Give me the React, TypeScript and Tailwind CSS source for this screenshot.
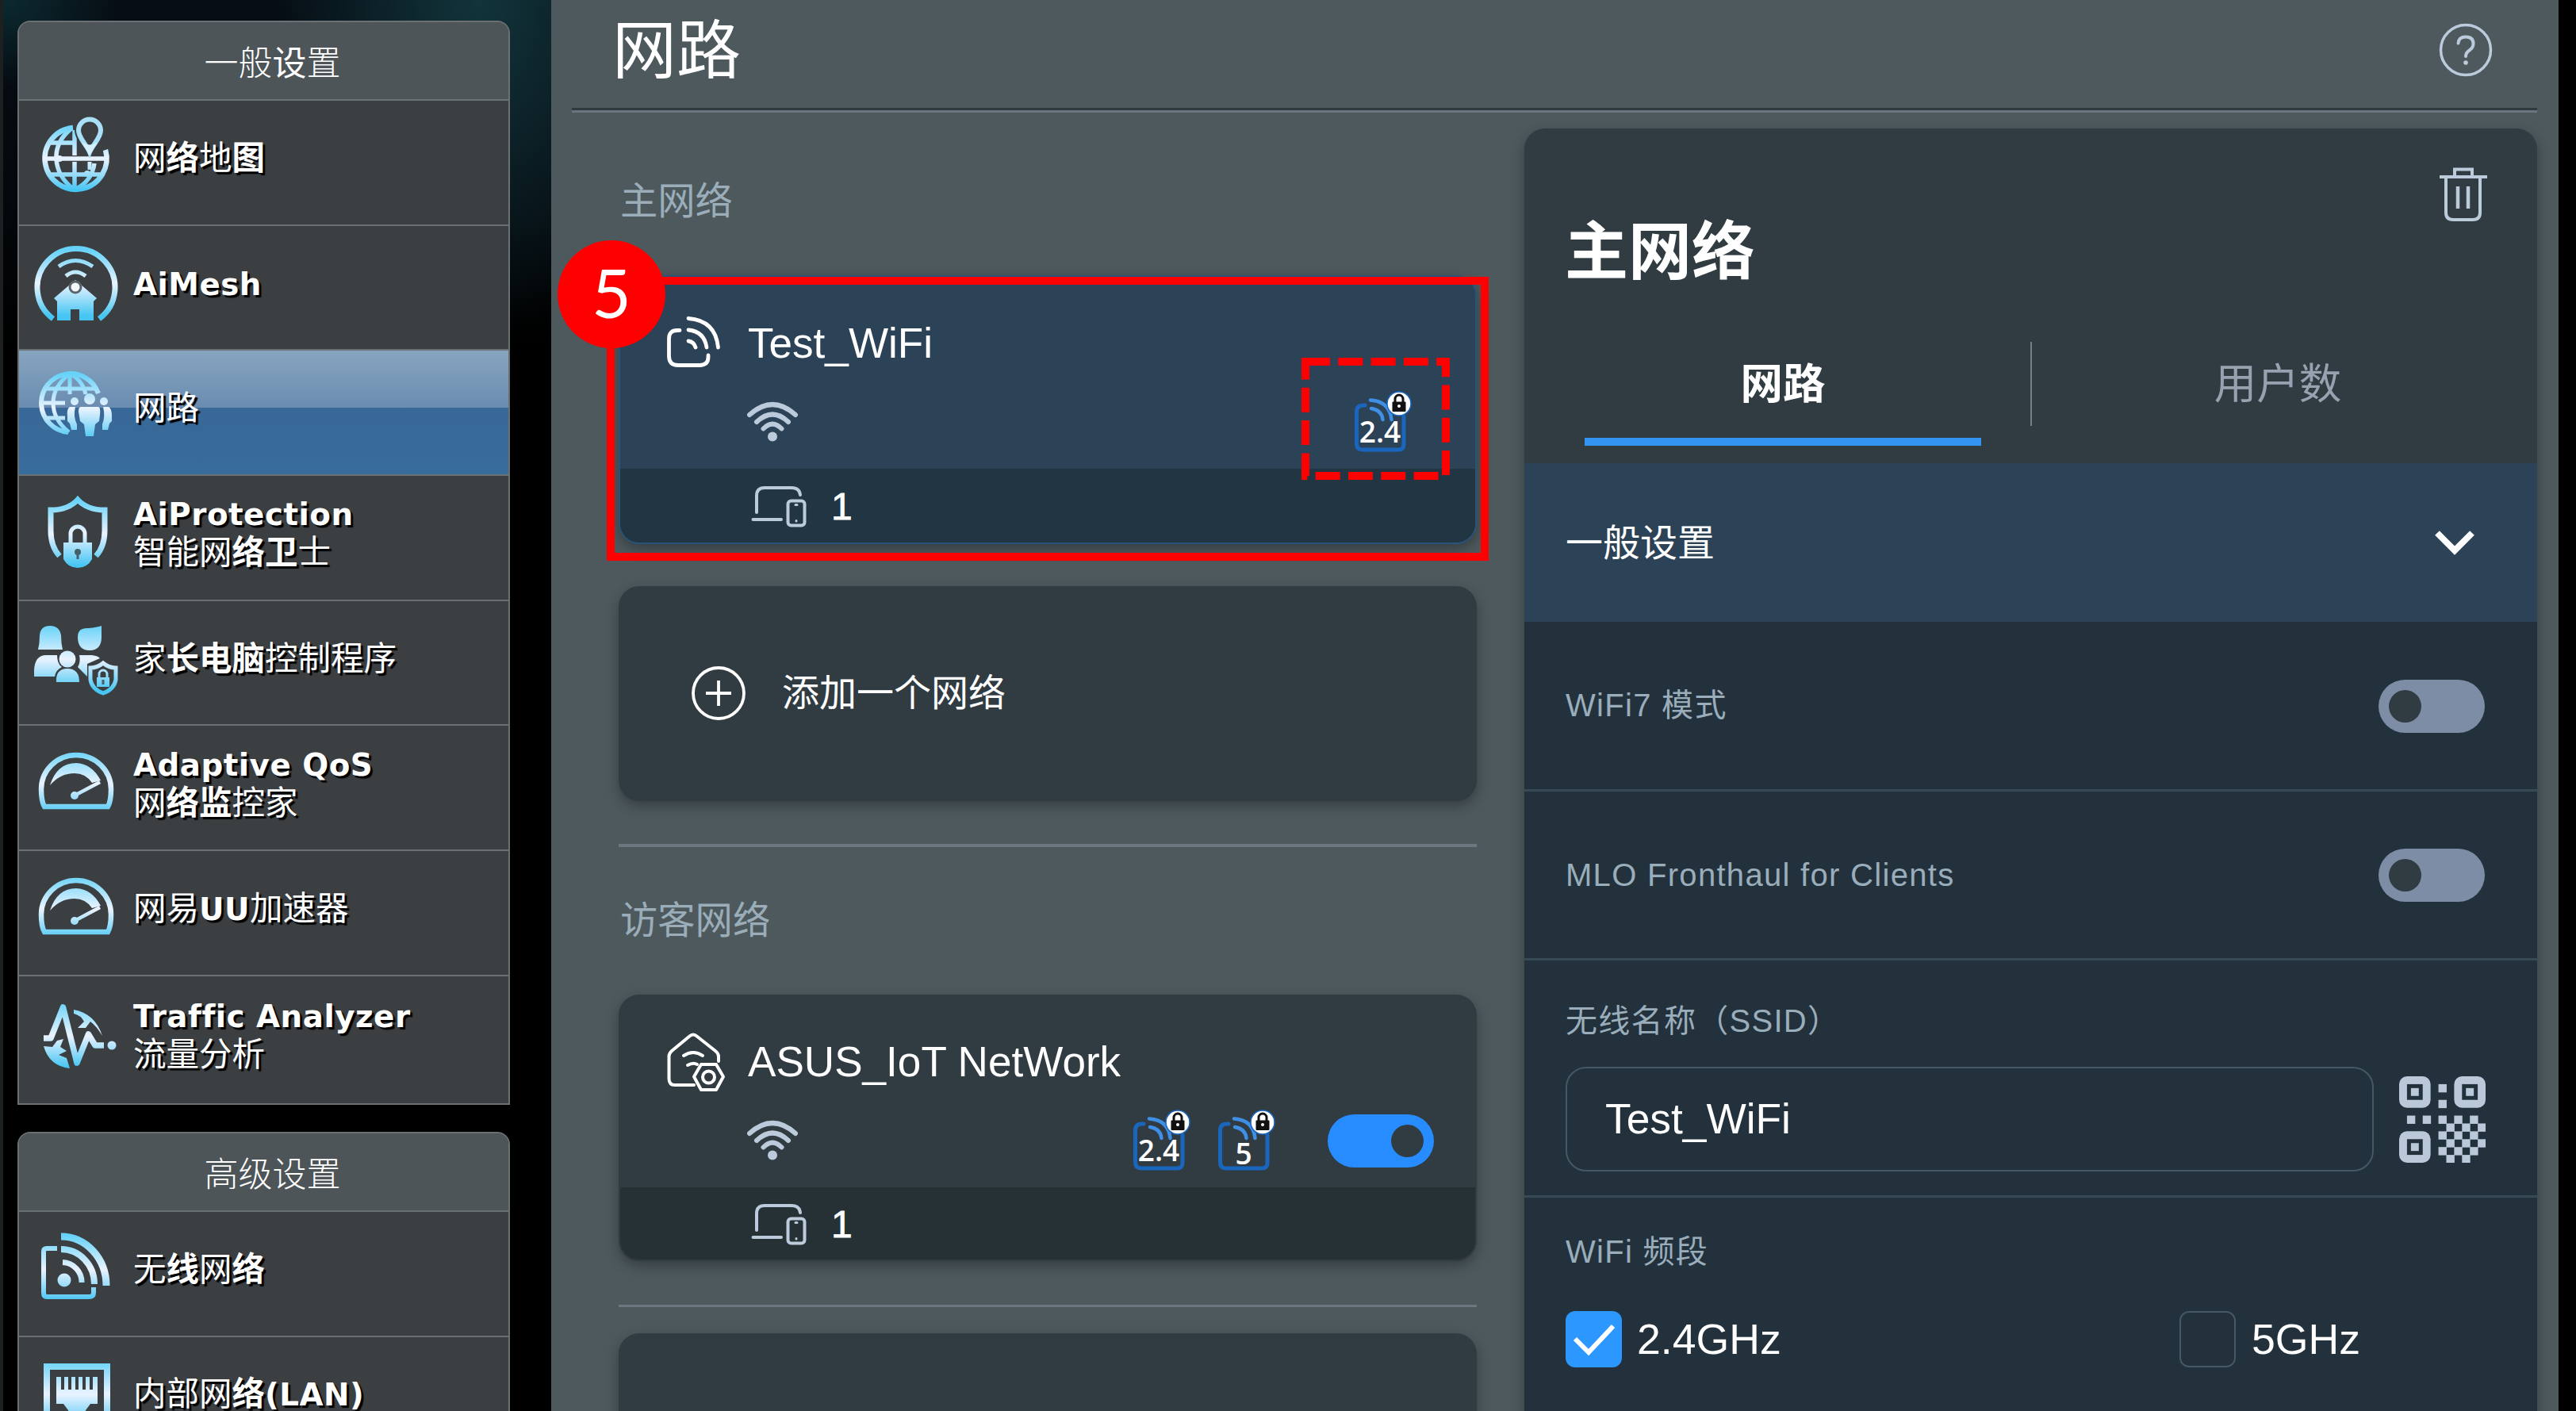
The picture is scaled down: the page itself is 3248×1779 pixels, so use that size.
import type { ReactNode } from "react";

const CJK = "font-['Liberation_Sans','Noto_Sans_CJK_SC',sans-serif]";

type Part = { t: string; b?: boolean; latin?: boolean };
type MenuItem = { icon: ReactNode; lines: Part[][]; active?: boolean; tall?: boolean };

// Shared blue/white vertical gradient used by every sidebar icon
function IconGradient() {
  return (
    <svg width="0" height="0" className="absolute">
      <defs>
        <linearGradient id="ice" gradientUnits="userSpaceOnUse" x1="0" y1="8" x2="0" y2="100">
          <stop offset="0.05" stopColor="#66d2f8" />
          <stop offset="0.52" stopColor="#eaf3ff" />
          <stop offset="0.95" stopColor="#48c6f3" />
        </linearGradient>
      </defs>
    </svg>
  );
}

function MenuIcon({ children }: { children: ReactNode }) {
  return (
    <svg width="110" height="110" viewBox="0 0 110 110" fill="none" stroke="url(#ice)" strokeWidth="6" className="shrink-0">
      {children}
    </svg>
  );
}

const mapIcon = (
  <MenuIcon>
    <path d="M50 17A39 39 0 1 0 91 45" strokeWidth="6.500" />
    <path d="M48 18Q28 34 29 56T50 94M52 60V94M54 94Q74 84 77 62M12 56H92M18 36H52M18 76H86" strokeWidth="5.500" />
    <path d="M52 20V52" strokeWidth="5.500" />
    <path d="M71 54C64 42 52 32 52 20a19 19 0 0 1 38 0C90 32 78 42 71 54Z" fill="#3b3f42" stroke="none" />
    <path d="M71 48C67 38 57 30 57 20.500a14 14 0 0 1 28 0C85 30 75 38 71 48Z" stroke="#a9e0f8" />
    <path d="M61 35L71 52L81 35Q71 42 61 35Z" fill="#d6effc" stroke="none" />
    <path d="M71 60V70" strokeWidth="5" />
    <circle cx="33" cy="56" r="4" fill="url(#ice)" stroke="none" />
    <circle cx="68" cy="75" r="4" fill="url(#ice)" stroke="none" />
  </MenuIcon>
);

const meshIcon = (
  <MenuIcon>
    <path d="M25 100A49 49 0 1 1 83 100" strokeWidth="7" />
    <path d="M32 34Q53 19 75 34M41 46Q53 36 66 46" strokeWidth="5" />
    <path d="M53 51L80 74L76 78V102H58V88H47V102H30V78L26 74Z" fill="url(#ice)" stroke="none" />
    <circle cx="53" cy="60" r="7" fill="#f4f8ff" stroke="#59636a" strokeWidth="3" />
  </MenuIcon>
);

const globePeopleIcon = (
  <MenuIcon>
    <path d="M82 37A37 37 0 1 0 44 86" strokeWidth="6" />
    <path d="M46 12V38M46 12Q25 28 25 49T45 86M46 12Q62 20 66 38M10 49H40M14 31H78M14 68H40" strokeWidth="5" />
    <circle cx="71" cy="44" r="7" fill="url(#ice)" stroke="none" />
    <circle cx="52" cy="47" r="5" fill="url(#ice)" stroke="none" />
    <circle cx="89" cy="47" r="5" fill="url(#ice)" stroke="none" />
    <path d="M60 54H82Q85 54 84 64L83 72L78 76L76 91H66L64 76L59 72L57 60Q57 54 60 54Z" fill="url(#ice)" stroke="none" />
    <path d="M53 54H46Q42 56 43 66V72L46 75L48 83H55V76Q50 66 53 54ZM88 54H95Q99 56 99 66V72L96 75L94 83H87V76Q91 66 88 54Z" fill="url(#ice)" stroke="none" />
  </MenuIcon>
);

const shieldIcon = (
  <MenuIcon>
    <path d="M33 84Q22 72 22 52V26Q44 26 56 13Q68 26 90 26V52Q90 72 79 84" strokeWidth="7" />
    <path d="M47 68V56a9 9 0 0 1 18 0V68" strokeWidth="5" />
    <path d="M38 67H74V88Q68 99 56 99T38 88Z" fill="url(#ice)" stroke="none" />
    <circle cx="56" cy="79" r="4" fill="#46606c" stroke="none" />
    <path d="M56 79V88" stroke="#46606c" strokeWidth="3" />
  </MenuIcon>
);

const familyIcon = (
  <MenuIcon>
    <g fill="url(#ice)" stroke="none">
      <path d="M6 44Q8 36 8 26Q9 14 21 14T35 26Q35 36 37 44Z" />
      <path d="M56 28Q56 16 70 17Q80 16 86 14V28Q86 45 71 45T56 28Z" />
      <path d="M1 78V70Q2 51 16 51H30Q30 62 36 66Q28 70 27 78Z" />
      <circle cx="43" cy="56" r="10.500" />
      <path d="M29 85Q28 68 43 68T58 85Z" />
      <path d="M58 51H74Q82 52 84 55L68 62V78Q62 72 56 66Q60 60 58 51Z" />
    </g>
    <path d="M88 61Q95 67 104 67V82Q102 94 88 99Q74 94 72 82V67Q81 67 88 61Z" fill="#3b3f42" strokeWidth="5" />
    <path d="M83 80V75a5 5 0 0 1 10 0V80" strokeWidth="3" />
    <rect x="80" y="79" width="16" height="12" fill="url(#ice)" stroke="none" />
    <path d="M88 82V88" stroke="#46606c" strokeWidth="3" />
  </MenuIcon>
);

const gaugeIcon = (
  <MenuIcon>
    <path d="M14 85Q10 78 10 63A44 43 0 0 1 98 63Q98 78 94 85Z" strokeWidth="6.500" />
    <path d="M21 58Q30 30 54 30Q74 31 85 52L74 55Q66 43 52 43Q34 43 21 58Z" fill="url(#ice)" stroke="none" />
    <path d="M52 71L84 54" strokeWidth="4.500" />
    <circle cx="52" cy="71" r="5" fill="url(#ice)" stroke="none" />
  </MenuIcon>
);

const trafficIcon = (
  <MenuIcon>
    <path d="M13 59H22L37.500 20L55 90L69.500 54L78 68H89" strokeWidth="7.500" strokeLinejoin="round" />
    <circle cx="99" cy="68" r="5.500" fill="url(#ice)" stroke="none" />
    <path d="M51 23Q78 28 87 56Q80 44 72 38L66 46H56L64 38Q60 30 51 28Z" fill="url(#ice)" stroke="none" />
    <path d="M13 69L24 70L30 62L38 60L34 70L42 75L32 80L42 84L46 97Q20 94 13 69Z" fill="url(#ice)" stroke="none" />
  </MenuIcon>
);

const wirelessIcon = (
  <MenuIcon>
    <path d="M30 29H17Q13 29 13 33V85Q13 90 17 90H70Q76 90 76 85V78" />
    <path d="M35 14A57 62 0 0 1 92 76" strokeWidth="9" />
    <path d="M35 30A42 44 0 0 1 77 74" strokeWidth="8" />
    <path d="M37 46.500A25 25 0 0 1 61 72" strokeWidth="7" />
    <circle cx="39" cy="69" r="8.500" fill="url(#ice)" stroke="none" />
  </MenuIcon>
);

const lanIcon = (
  <MenuIcon>
    <rect x="17" y="21" width="76" height="80" strokeWidth="8" />
    <path d="M29 34H35V50H39V34H44V50H48V34H53V50H57V34H62V50H66V34H71V50H75V34H81V68H72L66 76V84H44V76L38 68H29Z" fill="url(#ice)" stroke="none" />
  </MenuIcon>
);

const general: MenuItem[] = [
  { icon: mapIcon, lines: [[{ t: "网" }, { t: "络", b: true }, { t: "地" }, { t: "图", b: true }]] },
  { icon: meshIcon, lines: [[{ t: "AiMesh", latin: true }]] },
  { icon: globePeopleIcon, lines: [[{ t: "网路" }]], active: true },
  { icon: shieldIcon, lines: [[{ t: "AiProtection", latin: true }], [{ t: "智能网" }, { t: "络卫", b: true }, { t: "士" }]] },
  { icon: familyIcon, lines: [[{ t: "家" }, { t: "长电脑", b: true }, { t: "控制程序" }]] },
  { icon: gaugeIcon, lines: [[{ t: "Adaptive QoS", latin: true }], [{ t: "网" }, { t: "络监", b: true }, { t: "控家" }]] },
  { icon: gaugeIcon, lines: [[{ t: "网易" }, { t: "UU", latin: true }, { t: "加速器" }]] },
  { icon: trafficIcon, lines: [[{ t: "Traffic Analyzer", latin: true }], [{ t: "流量分析" }]], tall: true },
];

const advanced: MenuItem[] = [
  { icon: wirelessIcon, lines: [[{ t: "无" }, { t: "线", b: true }, { t: "网" }, { t: "络", b: true }]] },
  { icon: lanIcon, lines: [[{ t: "内部网" }, { t: "络", b: true }, { t: "(LAN)", latin: true }]] },
];

function MenuText({ part }: { part: Part }) {
  if (part.latin) {
    return <span className="font-['DejaVu_Sans'] text-[38.8px] font-bold tracking-[0.5px] [font-variant-ligatures:none]">{part.t}</span>;
  }
  return <span className={part.b ? "font-bold" : "font-normal"}>{part.t}</span>;
}

function Menu({ title, items }: { title: ReactNode; items: MenuItem[] }) {
  return (
    <nav className="w-[621px] shrink-0 overflow-hidden rounded-t-[16px] border-2 border-[#6b7072] bg-[#3b3f42]">
      <h2 className="flex h-[97px] items-center justify-center bg-[#4d5558] pt-2 pl-[22px] text-[43px] text-white">{title}</h2>
      {items.map((item, i) => (
        <div
          key={i}
          className={`flex items-center border-t-2 border-[#6b7072] pb-3 pl-[18px] ${item.tall ? "h-[162px]" : "h-[157.7px]"} ${
            item.active ? "bg-[linear-gradient(#87a5c0_0%,#6a8cb0_46%,#386897_46.5%,#386c9b_100%)]" : ""
          }`}
        >
          {item.icon}
          <div className="ml-[16px] pt-[1px] text-[41.5px] leading-[49px] whitespace-nowrap text-white [text-shadow:3px_3px_1px_#000]">
            {item.lines.map((line, j) => (
              <div key={j} className="h-[49px]">
                {line.map((part, k) => (
                  <MenuText key={k} part={part} />
                ))}
              </div>
            ))}
          </div>
        </div>
      ))}
    </nav>
  );
}

function RouterIcon() {
  return (
    <svg width="74" height="72" viewBox="0 0 74 72" fill="none" stroke="#fff" strokeWidth="4.800" strokeLinecap="round" className="shrink-0">
      <path d="M16 19.500H13Q2.500 19.500 2.500 30V52Q2.500 63.500 14 63.500H41Q52 63.500 52 53V51" />
      <path d="M27 4.500Q61 7 64.500 41" />
      <path d="M27 19Q47 21 50 41" />
      <path d="M27 33Q34 34 36 41" />
    </svg>
  );
}

function IotIcon() {
  return (
    <svg width="74" height="76" viewBox="0 0 74 76" fill="none" stroke="#fff" strokeWidth="4" strokeLinejoin="round" strokeLinecap="round" className="shrink-0">
      <path d="M34 67H10Q2.500 67 2.500 59V31Q2.500 27 6 24L29 5Q33 2 37 5L61 24Q65 27 65 31V37" />
      <path d="M21 30Q33 22 45 30M26 42Q33 38 38 41" />
      <path d="M43 41H62L71 56.500L62 73H43L34 56.500Z" />
      <circle cx="52.500" cy="57" r="7.500" />
    </svg>
  );
}

function WifiIcon() {
  return (
    <svg width="64" height="52" viewBox="0 0 64 52" fill="none" stroke="#bccbdc" strokeWidth="6" strokeLinecap="round" className="shrink-0">
      <path d="M3 17Q32 -9 61 17M12 26Q32 7 52 26M20.500 34.500Q32 23 43.500 34.500" />
      <circle cx="32" cy="44.500" r="6" fill="#bccbdc" stroke="none" />
    </svg>
  );
}

function DevicesIcon() {
  return (
    <svg width="70" height="54" viewBox="0 0 70 54" fill="none" stroke="#bccbdc" strokeWidth="4" strokeLinecap="round" className="shrink-0">
      <path d="M7 34V13Q7 3 17 3H51Q61 3 62 12M2.500 43H38" />
      <rect x="46.500" y="19.500" width="21" height="31" rx="4" />
      <path d="M56 24.500H58M57 44.500V45" strokeWidth="3" />
    </svg>
  );
}

function BandIcon({ label }: { label: string }) {
  return (
    <svg width="74" height="80" viewBox="0 0 74 80" fill="none" strokeLinecap="round" className="shrink-0">
      <path d="M15 19H13Q4.500 19 4.500 27V67Q4.500 75 12 75H57Q64 75 64 68V33" stroke="#1b66bd" strokeWidth="5" />
      <path d="M22 12.500Q46 14 48.500 37M23 23Q36 25 37.500 37" stroke="#3f8fe6" strokeWidth="4.500" />
      <circle cx="58" cy="17" r="15" fill="#fff" stroke="#1b66bd" strokeWidth="1.500" />
      <path d="M53 15V11a5 5 0 0 1 10 0V15" stroke="#111" strokeWidth="3" />
      <rect x="49.500" y="14.500" width="17" height="12.500" rx="1" fill="#111" />
      <circle cx="58" cy="20" r="2" fill="#fff" />
      <text x="34" y={label === "5" ? 70 : 66} textAnchor="middle" fill="#fff" className="font-['Open_Sans'] text-[37px] font-semibold">
        {label}
      </text>
    </svg>
  );
}

function Toggle({ on }: { on?: boolean }) {
  return (
    <div className={`flex h-[67px] w-[134px] shrink-0 items-center rounded-full px-[13px] ${on ? "justify-end bg-[#278cff]" : "bg-[#7d8da5]"}`}>
      <div className="size-[41px] rounded-full bg-[#303c42]" />
    </div>
  );
}

type NetworkCardProps = {
  name: string;
  icon: ReactNode;
  bands: string[];
  clients: number;
  selected?: boolean;
  toggle?: boolean;
};

function NetworkCard({ name, icon, bands, clients, selected, toggle }: NetworkCardProps) {
  return (
    <div
      className={`flex flex-col overflow-hidden rounded-[26px] border-2 shadow-[0_6px_16px_rgba(0,0,0,0.3)] ${
        selected ? "h-[339px] border-[#2a5379] bg-[#2c4256]" : "h-[336px] border-[#303c42] bg-[#303c42]"
      }`}
    >
      <div className={`shrink-0 pl-[59px] ${selected ? "h-[242px] pt-[48px]" : "h-[241px] pt-[47px]"}`}>
        <div className="flex h-[72px] items-center">
          {icon}
          <span className="ml-[28px] text-[53.1px] leading-[60px] text-white">{name}</span>
        </div>
        <div className="mt-[23px] flex h-[80px] items-center pl-[101px]">
          <WifiIcon />
          <div className={`ml-auto flex items-center gap-[33px] ${toggle ? "pr-[66px]" : "pr-[80px]"}`}>
            {bands.map((b) => (
              <BandIcon key={b} label={b} />
            ))}
          </div>
          {toggle && (
            <div className="pr-[52px]">
              <Toggle on />
            </div>
          )}
        </div>
      </div>
      <div className={`flex flex-1 items-center pt-[2px] pl-[165px] ${selected ? "bg-[#213542]" : "bg-[#263136]"}`}>
        <DevicesIcon />
        <span className="ml-[31px] text-[48px] leading-[50px] text-white [-webkit-text-stroke:0.8px_#fff]">{clients}</span>
      </div>
    </div>
  );
}

function QrIcon() {
  const dots = [
    [5, 1], [5, 3],
    [1, 5], [3, 5], [5, 5], [7, 5], [9, 5],
    [6, 6], [8, 6], [10, 6],
    [5, 7], [7, 7], [9, 7],
    [6, 8], [8, 8], [10, 8],
    [5, 9], [7, 9], [9, 9],
    [6, 10], [8, 10],
  ];
  const finders = [[0, 0], [7, 0], [0, 7]];
  return (
    <svg width="109" height="109" viewBox="0 0 11 11" fill="#bac8da" className="shrink-0">
      {finders.map(([x, y]) => (
        <g key={`${x}-${y}`}>
          <rect x={x} y={y} width="4" height="4" rx="1" />
          <rect x={x + 1} y={y + 1} width="2" height="2" fill="#22313b" />
          <rect x={x + 1.5} y={y + 1.5} width="1" height="1" />
        </g>
      ))}
      {dots.map(([x, y]) => (
        <rect key={`${x}-${y}`} x={x} y={y} width="1.05" height="1.05" />
      ))}
    </svg>
  );
}

function SettingsPanel() {
  const label = "text-[40px] leading-[48px] tracking-[1.3px] text-[#9aadbb]";
  return (
    <section className="mt-[20px] flex w-[1277px] shrink-0 flex-col overflow-hidden rounded-t-[26px] bg-[#303c42] shadow-[0_6px_16px_rgba(0,0,0,0.3)]">
      <div className="flex h-[422px] shrink-0 flex-col">
        <div className="flex h-[269px] items-start justify-between pt-[47px] pr-[60px] pl-[51px]">
          <h2 className="mt-[69px] text-[80px] leading-[80px] font-bold text-white">主网络</h2>
          <svg width="64" height="72" viewBox="0 0 64 72" fill="none" stroke="#bccbdc" strokeWidth="4" className="mr-[1px]">
            <path d="M2 14H62M21 13V4.500H43V13M10 15V59Q10 68 19 68H44Q53 68 53 59V15" />
            <path d="M25 26V54M38 26V54" strokeWidth="4.500" />
          </svg>
        </div>
        <div className="flex items-start">
          <div className="ml-[76px] w-[500px]">
            <div className="flex h-[106px] items-center justify-center pt-[3px] text-[53.5px] font-bold text-white">网路</div>
            <div className="mt-[15px] h-[10px] bg-[#3495f0]" />
          </div>
          <div className="ml-[62px] h-[106px] w-[2px] bg-[#74808a]" />
          <div className="flex h-[106px] w-[620px] items-center justify-center pt-[3px] text-[53.5px] text-[#97a2b1]">用户数</div>
        </div>
      </div>
      <div className="flex h-[200px] shrink-0 items-center justify-between bg-[#2c4256] pt-[2px] pr-[79px] pl-[52px] text-[47px] text-white">
        一般设置
        <svg width="50" height="34" viewBox="0 0 50 34" fill="none" stroke="#fff" strokeWidth="8">
          <path d="M3 4L25 26L47 4" />
        </svg>
      </div>
      <div className="flex-1 bg-[#22313b]">
        {["WiFi7 模式", "MLO Fronthaul for Clients"].map((text) => (
          <div key={text} className="flex h-[213.500px] items-center justify-between border-b-[3px] border-[#374955] pt-[2px] pr-[66px] pl-[52px]">
            <span className={`${label} -mt-[2px]`}>{text}</span>
            <Toggle />
          </div>
        ))}
        <div className="h-[299px] border-b-[3px] border-[#374955] pt-[52px] pr-[65px] pl-[52px]">
          <div className={label}>无线名称（SSID）</div>
          <div className="mt-[34px] flex items-center justify-between">
            <div className="flex h-[132px] w-[1019px] items-center rounded-[26px] border-2 border-[#465864] pl-[48px] text-[53.3px] text-white">
              Test_WiFi
            </div>
            <QrIcon />
          </div>
        </div>
        <div className="pt-[44px] pl-[52px]">
          <div className={label}>WiFi 频段</div>
          <div className="mt-[51px] flex text-[53.6px] leading-[71px] text-white">
            <div className="flex w-[774px]">
              <div className="flex size-[71px] items-center justify-center rounded-[12px] bg-[#2c97ff]">
                <svg width="54" height="44" viewBox="0 0 54 44" fill="none" stroke="#fff" strokeWidth="6">
                  <path d="M3 21L20 38L51 5" />
                </svg>
              </div>
              <span className="ml-[19px]">2.4GHz</span>
            </div>
            <div className="flex">
              <div className="size-[71px] rounded-[12px] border-2 border-[#465864]" />
              <span className="ml-[20px]">5GHz</span>
            </div>
          </div>
        </div>
      </div>
    </section>
  );
}

export default function App() {
  const cardShadow = "rounded-[26px] bg-[#303c42] shadow-[0_6px_16px_rgba(0,0,0,0.3)]";
  return (
    <div className={`relative flex h-[1779px] w-[3248px] overflow-hidden bg-black ${CJK}`} lang="zh-CN">
      <IconGradient />
      <aside className="flex w-[695px] shrink-0 flex-col border-l-[4px] border-[#1c2021] bg-[radial-gradient(ellipse_150px_110px_at_0px_0px,#0b2a30,transparent),radial-gradient(ellipse_260px_420px_at_600px_0px,#12343b,transparent),linear-gradient(#060d14_0px,#04080c_260px,#000_440px)] pl-[18px]">
        <div className="mt-[26px]">
          <Menu
            title={
              <>
                <span className="font-light">一般</span>
                <span>设</span>
                <span className="font-light">置</span>
              </>
            }
            items={general}
          />
        </div>
        <div className="mt-[34px]">
          <Menu title={<span className="font-light">高级设置</span>} items={advanced} />
        </div>
      </aside>

      <main className="flex w-[2531px] shrink-0 flex-col bg-[#4d595d]">
        <header className="mr-[27px] ml-[26px] flex h-[142px] shrink-0 items-center justify-between border-b-[3px] border-[#68767f] pb-[13px] pl-[51px] shadow-[inset_0_-3px_0_#2f3a3f]">
          <h1 className="mt-[2px] text-[81px] leading-[80px] text-white">网路</h1>
          <svg width="68" height="68" viewBox="0 0 68 68" fill="none" stroke="#bccbdc" strokeWidth="3.500" strokeLinecap="round" className="mr-[56px]">
            <circle cx="34" cy="34" r="31.500" />
            <path d="M24.500 25.500Q25 17.500 34 17.500Q43.500 17.500 43.500 26Q43.500 31 38.500 34.500Q34 37.500 34 42" strokeWidth="4" />
            <circle cx="34" cy="50" r="2.800" fill="#bccbdc" stroke="none" />
          </svg>
        </header>

        <div className="flex flex-1">
          <div className="mr-[60px] ml-[85px] w-[1082px] shrink-0">
            <h3 className="mt-[88px] pl-[2px] text-[47.3px] leading-[48px] text-[#9aadb9]">主网络</h3>
            <div className="mt-[69px]">
              <NetworkCard name="Test_WiFi" icon={<RouterIcon />} bands={["2.4"]} clients={1} selected />
            </div>
            <div className={`mt-[53px] flex h-[271px] items-center pl-[92px] ${cardShadow}`}>
              <svg width="68" height="68" viewBox="0 0 68 68" fill="none" stroke="#fff" strokeWidth="3.800" className="-mt-[2px]">
                <circle cx="34" cy="34" r="32" />
                <path d="M34 18V50M18 34H50" />
              </svg>
              <span className="ml-[46px] text-[47px] text-white">添加一个网络</span>
            </div>
            <div className="mt-[54px] h-[4px] bg-[#6b777f]" />
            <h3 className="mt-[69px] pl-[2px] text-[47.3px] leading-[48px] text-[#9aadb9]">访客网络</h3>
            <div className="mt-[69px]">
              <NetworkCard name="ASUS_IoT NetWork" icon={<IotIcon />} bands={["2.4", "5"]} clients={1} toggle />
            </div>
            <div className="mt-[55px] h-[3px] bg-[#6b777f]" />
            <div className={`mt-[33px] h-[300px] ${cardShadow}`} />
          </div>
          <SettingsPanel />
        </div>
      </main>

      {/* step markers drawn over the page */}
      <div className="absolute top-[349px] left-[765px] h-[358px] w-[1112px] border-[10px] border-[#ff0000]" />
      <svg className="absolute top-[451px] left-[1641px]" width="187" height="154" fill="none">
        <rect x="5" y="5" width="177" height="144" stroke="#ff0000" strokeWidth="10" strokeDasharray="31 10.3" />
      </svg>
      <div className="absolute top-[303px] left-[703px] flex size-[136px] items-center justify-center rounded-full bg-[#ff0000] pb-[6px] font-['Lato'] text-[86px] leading-none text-white">
        5
      </div>
    </div>
  );
}
